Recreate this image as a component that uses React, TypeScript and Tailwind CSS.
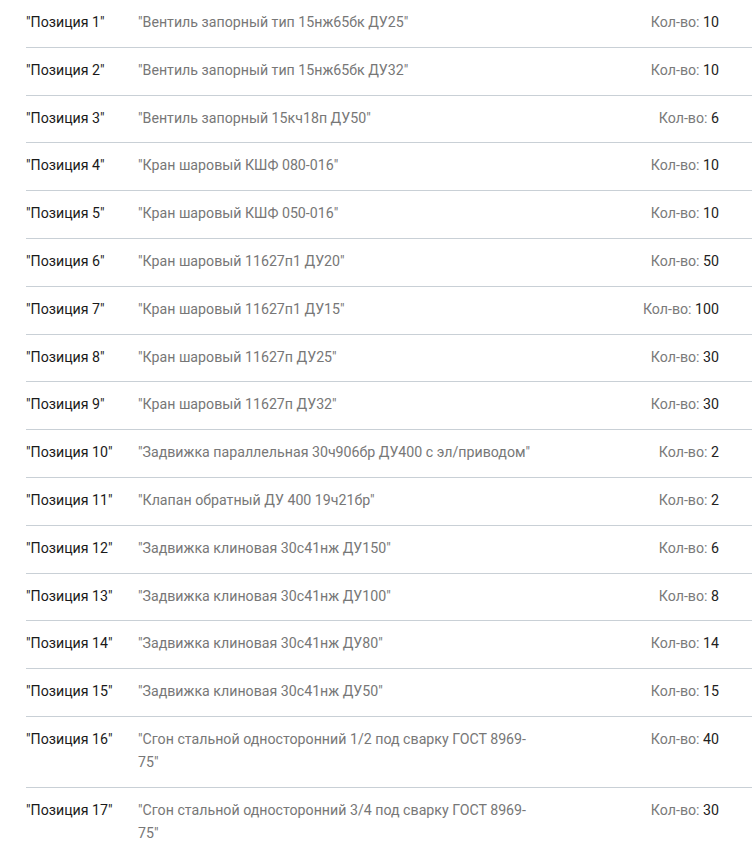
import React from "react";

const items: { name: string; qty: number }[] = [
  { name: "Вентиль запорный тип 15нж65бк ДУ25", qty: 10 },
  { name: "Вентиль запорный тип 15нж65бк ДУ32", qty: 10 },
  { name: "Вентиль запорный 15кч18п ДУ50", qty: 6 },
  { name: "Кран шаровый КШФ 080-016", qty: 10 },
  { name: "Кран шаровый КШФ 050-016", qty: 10 },
  { name: "Кран шаровый 11627п1 ДУ20", qty: 50 },
  { name: "Кран шаровый 11627п1 ДУ15", qty: 100 },
  { name: "Кран шаровый 11627п ДУ25", qty: 30 },
  { name: "Кран шаровый 11627п ДУ32", qty: 30 },
  { name: "Задвижка параллельная 30ч906бр ДУ400 с эл/приводом", qty: 2 },
  { name: "Клапан обратный ДУ 400 19ч21бр", qty: 2 },
  { name: "Задвижка клиновая 30с41нж ДУ150", qty: 6 },
  { name: "Задвижка клиновая 30с41нж ДУ100", qty: 8 },
  { name: "Задвижка клиновая 30с41нж ДУ80", qty: 14 },
  { name: "Задвижка клиновая 30с41нж ДУ50", qty: 15 },
  { name: "Сгон стальной односторонний 1/2 под сварку ГОСТ 8969-75", qty: 40 },
  { name: "Сгон стальной односторонний 3/4 под сварку ГОСТ 8969-75", qty: 30 },
];

export default function App() {
  return (
    <div
      className="w-[752px] overflow-hidden bg-white text-[14.2px] leading-[23px]"
      style={{ fontFamily: "Roboto, 'Noto Sans', sans-serif" }}
    >
      <div className="ml-[26px]">
        {items.map((it, i) => (
          <div
            key={i}
            className="flex items-start border-b border-[#c9d0d6] pt-[11px] pb-[12.8px] pr-[33px]"
          >
            <div className="w-[112px] shrink-0 text-[#1a1a1a]">"Позиция {i + 1}"</div>
            <div className="w-[400px] shrink-0 text-[#777777]">"{it.name}"</div>
            <div className="flex-1 text-right">
              <span className="text-[#7a7a7a]">Кол-во: </span>
              <span className="text-[#222222]">{it.qty}</span>
            </div>
          </div>
        ))}
      </div>
    </div>
  );
}
